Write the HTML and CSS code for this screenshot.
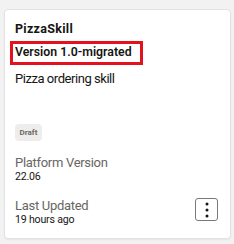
FILE: index.html
```html
<!DOCTYPE html>
<html lang="en">
<head>
    <meta charset="UTF-8">
    <title>PizzaSkill</title>
    <link rel="stylesheet" href="styles.css">
</head>
<body>
    <div class="card">
        <div class="card-title">PizzaSkill</div>
        <div class="card-version">Version 1.0-migrated</div>
        <div class="card-desc">Pizza ordering skill</div>

        <span class="badge">Draft</span>

        <div class="field">
            <div class="field-label">Platform Version</div>
            <div class="field-value">22.06</div>
        </div>

        <div class="card-footer">
            <div class="field">
                <div class="field-label">Last Updated</div>
                <div class="field-value">19 hours ago</div>
            </div>
            <button class="menu-btn" aria-label="More actions">
                <svg width="4" height="16" viewBox="0 0 4 16">
                    <circle cx="2" cy="2" r="1.5" fill="#161513"/>
                    <circle cx="2" cy="8" r="1.5" fill="#161513"/>
                    <circle cx="2" cy="14" r="1.5" fill="#161513"/>
                </svg>
            </button>
        </div>
    </div>
</body>
</html>
```

FILE: styles.css
```css
* {
    margin: 0;
    padding: 0;
    box-sizing: border-box;
}

body {
    background: #f2f2f2;
    padding: 9px 3px 5px 4px;
    font-family: Roboto, "Liberation Sans", sans-serif;
    color: #161513;
}

/* Scheda */
.card {
    background: #fff;
    border: 1px solid #e3e3e3;
    border-radius: 4px;
    box-shadow: 0 1px 2px rgba(0, 0, 0, 0.06);
    height: 230px;
    padding: 10px 10px 0 10px;
    display: flex;
    flex-direction: column;
}

.card-title {
    font-size: 12.5px;
    font-weight: 700;
    letter-spacing: 0.3px;
    line-height: 18px;
}

.card-version {
    align-self: flex-start;
    border: 3px solid #e4121f;
    font-size: 12.3px;
    font-weight: 600;
    line-height: 17px;
    padding: 0 8px 1px 2px;
    margin: 3px 0 0 -5px;
}

.card-desc {
    font-size: 13px;
    letter-spacing: -0.45px;
    line-height: 18px;
    margin-top: 5px;
}

.badge {
    align-self: flex-start;
    margin-top: 36px;
    background: #efedeb;
    color: #6b6a68;
    font-size: 8px;
    font-weight: 700;
    line-height: 17px;
    padding: 0 4.5px;
    border-radius: 4px;
}

.field {
    margin-top: 14px;
}

.field-label {
    color: #68665f;
    font-size: 13px;
    letter-spacing: -0.3px;
    line-height: 15px;
}

.field-value {
    font-size: 10.6px;
    letter-spacing: -0.2px;
    line-height: 13px;
}

.card-footer {
    display: flex;
    justify-content: space-between;
    align-items: flex-end;
}

.card-footer .field {
    margin-top: 15px;
}

.menu-btn {
    width: 23px;
    height: 23px;
    border: 1px solid #7a7977;
    border-radius: 3px;
    background: #fff;
    display: flex;
    align-items: center;
    justify-content: center;
    margin: 0 2px 5px 0;
}
```
